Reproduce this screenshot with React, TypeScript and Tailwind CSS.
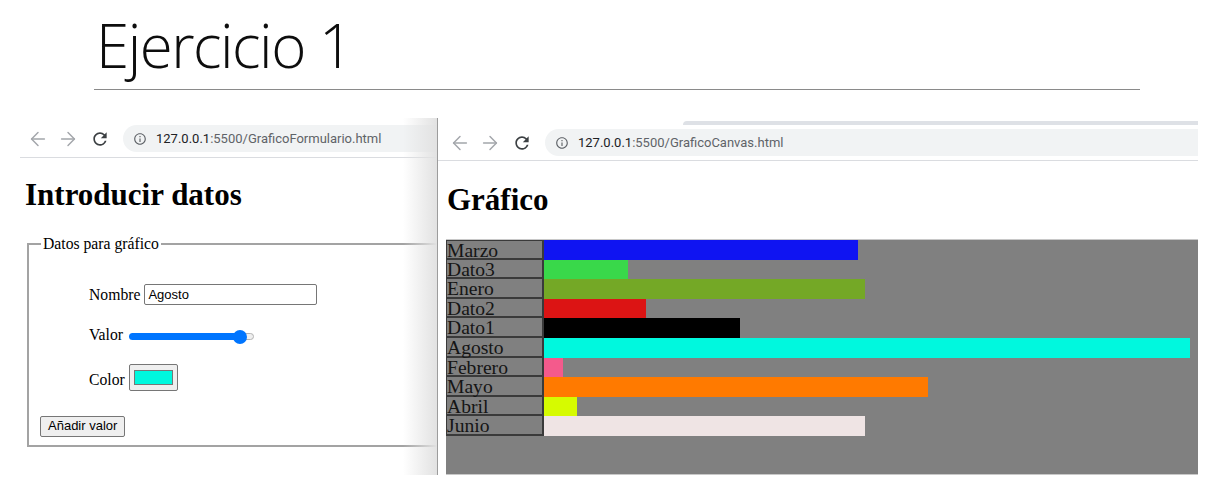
import React from "react";
import { ArrowLeft, ArrowRight } from "lucide-react";

const bars = [
  { name: "Marzo", w: 314, c: "#0f14f2" },
  { name: "Dato3", w: 84, c: "#39d84a" },
  { name: "Enero", w: 321, c: "#74a826" },
  { name: "Dato2", w: 102, c: "#dc1414" },
  { name: "Dato1", w: 196, c: "#000000" },
  { name: "Agosto", w: 646, c: "#00f8de" },
  { name: "Febrero", w: 19, c: "#f45a8c" },
  { name: "Mayo", w: 384, c: "#ff7a00" },
  { name: "Abril", w: 33, c: "#d6fb00" },
  { name: "Junio", w: 321, c: "#efe4e4" },
];

function ReloadIcon({ className }: { className?: string }) {
  return (
    <svg width="20" height="20" viewBox="0 0 24 24" className={className}>
      <path
        fill="#3c4043"
        d="M17.65 6.35A7.958 7.958 0 0 0 12 4c-4.42 0-7.99 3.58-7.99 8s3.57 8 7.99 8c3.73 0 6.84-2.55 7.73-6h-2.08A5.99 5.99 0 0 1 12 18c-3.31 0-6-2.69-6-6s2.69-6 6-6c1.66 0 3.14.69 4.22 1.78L13 11h7V4l-2.35 2.35z"
      />
    </svg>
  );
}

function InfoIcon() {
  return (
    <svg width="14" height="14" viewBox="0 0 24 24" className="shrink-0">
      <path
        fill="#5f6368"
        d="M11 7h2v2h-2zm0 4h2v6h-2zm1-9C6.48 2 2 6.48 2 12s4.48 10 10 10 10-4.48 10-10S17.52 2 12 2zm0 18c-4.41 0-8-3.59-8-8s3.59-8 8-8 8 3.590 8 8-3.59 8-8 8z"
      />
    </svg>
  );
}

function Toolbar({ path, className }: { path: string; className: string }) {
  return (
    <div className={className}>
      <ArrowLeft size={22} strokeWidth={1.6} color="#a3a6ab" className="shrink-0" />
      <ArrowRight size={22} strokeWidth={1.6} color="#a3a6ab" className="ml-[8px] shrink-0" />
      <ReloadIcon className="ml-[11px] shrink-0" />
      <div className="ml-[13px] flex-1 h-[27px] rounded-l-full bg-[#f1f3f4] flex items-center pl-[10px] whitespace-nowrap overflow-hidden">
        <InfoIcon />
        <span className="ml-[9px] text-[13px] font-['Roboto',sans-serif]">
          <span className="text-[#202124]">127.0.0.1</span>
          <span className="text-[#5f6368]">:5500/{path}</span>
        </span>
      </div>
    </div>
  );
}

export default function App() {
  return (
    <div className="w-[1227px] h-[501px] bg-white overflow-hidden text-black">
      <h1 className="pt-[15px] pl-[96px] text-[60px] leading-[60px] font-light tracking-[-1.5px] font-['Open_Sans',sans-serif] text-[#0d0d0d]">
        Ejercicio 1
      </h1>
      <div className="mt-[14px] ml-[94px] w-[1046px] h-px bg-[#8a8a8a]" />

      <div className="mt-[28px] flex">
        {/* Left window */}
        <div className="relative ml-[20px] w-[418px] h-[357px] border-r border-[#9c9c9c] overflow-hidden">
          <div className="h-[40px] border-b border-[#dadce0] pt-[7px]">
            <Toolbar path="GraficoFormulario.html" className="flex items-center h-[27px] ml-[7px]" />
          </div>
          <div className="font-['Liberation_Serif',serif]">
            <h2 className="mt-[19px] ml-[5px] text-[31px] leading-[36px] font-bold">Introducir datos</h2>
            <fieldset className="mt-[22px] ml-[7px] w-[440px] border-2 border-[#a3a3a3] pl-[11px] pb-[8px] text-[15.7px] leading-[18px]">
              <legend className="ml-[1px] px-[2px] leading-[18px]">Datos para gráfico</legend>
              <div className="mt-[31px] ml-[49px] flex items-center">
                <span>Nombre</span>
                <div className="ml-[4px] w-[173px] h-[21px] border border-[#767676] rounded-[2px] pl-[3px] flex items-center text-[13px] font-['Liberation_Sans',sans-serif]">
                  Agosto
                </div>
              </div>
              <div className="mt-[21px] ml-[49px] flex items-baseline">
                <span>Valor</span>
                <div className="relative ml-[5px] w-[127px] h-[16px] flex items-center">
                  <div className="ml-[1px] w-[111px] h-[7px] rounded-l-full bg-[#0075ff]" />
                  <div className="w-[14px] h-[7px] rounded-r-full border border-[#b3b3b3] bg-[#efefef]" />
                  <div className="absolute left-[105px] top-[1px] w-[14px] h-[14px] rounded-full bg-[#0075ff]" />
                </div>
              </div>
              <div className="mt-[19px] ml-[49px] flex items-end">
                <span className="mb-[2px]">Color</span>
                <div className="ml-[4px] w-[49px] h-[27px] border border-[#767676] rounded-[2px] bg-[#efefef] flex items-center justify-center">
                  <div className="w-[39px] h-[15px] border border-[#777] bg-[#00f8de]" />
                </div>
              </div>
              <div className="mt-[25px] flex">
                <div className="h-[21px] px-[7px] border border-[#767676] rounded-[2px] bg-[#efefef] flex items-center text-[13px] font-['Liberation_Sans',sans-serif]">
                  Añadir valor
                </div>
              </div>
            </fieldset>
          </div>
          <div className="absolute right-0 top-0 bottom-0 w-[34px] bg-linear-to-r from-[#ffffff00] to-[#e2e2e2]" />
        </div>

        {/* Right window */}
        <div className="w-[760px] h-[357px]">
          <div className="mt-[3px] ml-[245px] h-[4px] rounded-tl-[4px] bg-[#dee1e6]" />
          <div className="h-[36px] border-b border-[#dadce0] pt-[4px]">
            <Toolbar path="GraficoCanvas.html" className="flex items-center h-[27px] ml-[11px]" />
          </div>
          <h2 className="mt-[21px] ml-[9px] text-[31px] leading-[36px] font-bold font-['Liberation_Serif',serif]">Gráfico</h2>
          <div className="mt-[21px] ml-[8px] w-[752px] h-[236px] bg-[#808080] border-y border-[#c8c8c8]">
            {bars.map((b, i) => (
              <div key={b.name} className="flex h-[19.6px]">
                <div
                  className={`w-[98px] shrink-0 border-l border-r-2 border-b-2 border-[#3a3a3a] text-[19.6px] leading-[19.6px] text-[#151515] font-['Liberation_Serif',serif] ${i === 0 ? "border-t" : ""}`}
                >
                  {b.name}
                </div>
                <div className="h-full" style={{ width: b.w, backgroundColor: b.c }} />
              </div>
            ))}
          </div>
        </div>
      </div>
    </div>
  );
}
